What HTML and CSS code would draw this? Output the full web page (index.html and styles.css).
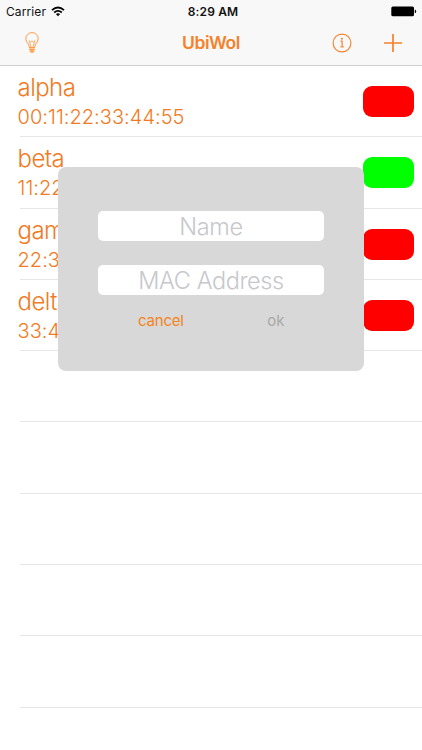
FILE: index.html
```html
<!DOCTYPE html>
<html lang="en">
<head>
<meta charset="utf-8">
<title>UbiWol</title>
<link rel="stylesheet" href="styles.css">
</head>
<body>
<div class="screen">
  <header class="header">
    <div class="status">
      <div class="carrier"><span>Carrier</span>
        <svg class="wifi" width="14" height="11" viewBox="0 0 14 11"><path d="M1 4.2Q7-1.1 13 4.2M3.2 6.5Q7 3.2 10.8 6.5" fill="none" stroke="#000" stroke-width="1.8"/><path d="M4.9 8.1Q7 6.4 9.1 8.1L7 10.3Z"/></svg>
      </div>
      <span class="time">8:29 AM</span>
      <svg class="battery" width="26" height="11" viewBox="0 0 26 11"><rect x=".3" y=".5" width="22.7" height="9.8" rx="1.6"/><path d="M23.8 3.6Q25.2 4 25.2 5.4T23.8 7.2Z"/></svg>
    </div>
    <nav class="nav">
      <svg class="bulb" width="16" height="22" viewBox="0 0 16 22" fill="none" stroke="#ff9b45" stroke-width="1"><path d="M5.2 15C5.2 11.5 1.8 10.5 1.8 6.8A6.2 6.2 0 0 1 14.2 6.8C14.2 10.5 10.8 11.5 10.8 15"/><path d="M6.9 15L5.3 8.8L6.7 10L8 8.8L9.3 10L10.7 8.8L9.1 15" stroke-width=".8"/><path d="M5 15.6h6M5.2 17.3h5.6M5.5 18.8h5M6.5 20.2h3" stroke-width="1.2"/></svg>
      <h1 class="title">UbiWol</h1>
      <div class="actions">
        <svg width="20" height="20" viewBox="0 0 20 20" fill="none" stroke="#f5812a"><circle cx="10" cy="10" r="8.9" stroke-width="1.1"/><path d="M8.5 8.2h1.6v5.6" stroke-width="1.2"/><path d="M8.2 13.9h3.8" stroke-width="1"/><circle cx="9.9" cy="5.8" r="1" fill="#f5812a" stroke="none"/></svg>
        <svg width="18" height="18" viewBox="0 0 18 18"><path d="M9 0v18M0 9h18" stroke="#f5812a" stroke-width="1.7"/></svg>
      </div>
    </nav>
  </header>
  <main class="list">
    <div class="row"><div><div class="name">alpha</div><div class="mac">00:11:22:33:44:55</div></div><i class="state off"></i></div>
    <div class="row"><div><div class="name">beta</div><div class="mac">11:22</div></div><i class="state on"></i></div>
    <div class="row"><div><div class="name">gam</div><div class="mac">22:3</div></div><i class="state off"></i></div>
    <div class="row"><div><div class="name">delta</div><div class="mac">33:4</div></div><i class="state off"></i></div>
    <div class="row"></div><div class="row"></div><div class="row"></div><div class="row"></div><div class="row"></div>
  </main>
  <form class="dialog">
    <div class="field">Name</div>
    <div class="field">MAC Address</div>
    <div class="buttons"><span class="cancel">cancel</span><span class="ok">ok</span></div>
  </form>
</div>
</body>
</html>
```
FILE: styles.css
```css
* { box-sizing: border-box; }
body { margin: 0; background: #fff; font-family: Inter, "Liberation Sans", sans-serif; }
svg { display: block; }
.screen { position: relative; width: 422px; height: 750px; overflow: hidden; }
.header { height: 66px; background: #f8f8f8; border-bottom: 1px solid #d0d0d2; }
.status { height: 22px; display: grid; grid-template-columns: 1fr auto 1fr; align-items: center; padding: 0 5px 0 6px; font-size: 12px; color: #111; }
.carrier { display: flex; align-items: center; gap: 5px; letter-spacing: .1px; }
.time { font-weight: 600; letter-spacing: .15px; padding-left: 3px; }
.battery { justify-self: end; }
.nav { height: 42px; display: grid; grid-template-columns: 1fr auto 1fr; align-items: center; padding: 0 20px 0 24px; }
.title { margin: 0 4px 0 0; font-size: 17.5px; line-height: 22px; font-weight: 600; letter-spacing: -.45px; color: #f5812a; }
.actions { display: flex; justify-content: flex-end; align-items: center; gap: 32px; }
.row { height: 71.3px; display: flex; justify-content: space-between; padding: 6px 8.5px 0 17.5px; color: #f17a22; font-weight: 300; background: linear-gradient(#e6e6e8, #e6e6e8) 20px 100% / 100% 1px no-repeat; }
.name { font-size: 24px; line-height: 31px; letter-spacing: -.55px; }
.mac { font-size: 20px; line-height: 29px; letter-spacing: .04px; }
.state { width: 51px; height: 31px; margin-top: 14px; border-radius: 9px; }
.off { background: #f00; }
.on { background: #0f0; }
.dialog { position: absolute; left: 58px; top: 167px; width: 306px; height: 204px; padding: 44px 40px 0; border-radius: 8px; background: #d8d8d8; }
.field { height: 30px; margin-bottom: 24px; border-radius: 5px; background: #fff; color: #c7c7cc; font-size: 23.5px; line-height: 31px; font-weight: 300; text-align: center; letter-spacing: -.4px; }
.buttons { display: flex; justify-content: space-between; margin-top: -9px; padding: 0 39.5px 0 40px; font-size: 15px; line-height: 22px; }
.cancel { color: #f38420; letter-spacing: -.2px; }
.ok { color: #a9a9a9; }
```
